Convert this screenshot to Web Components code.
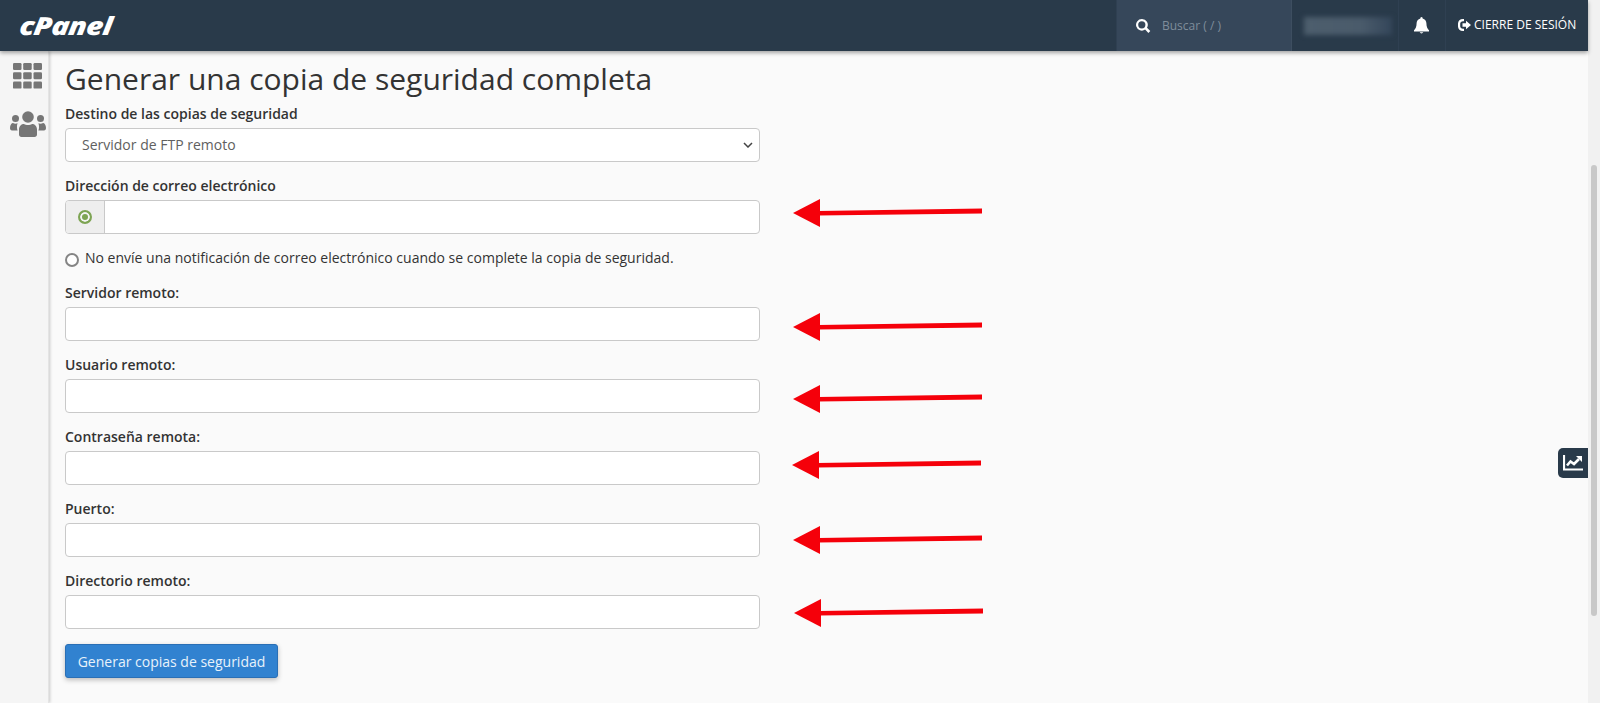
<!DOCTYPE html>
<html lang="es">
<head>
<meta charset="utf-8">
<title>Generar una copia de seguridad completa</title>
<style>
  html, body { margin: 0; height: 100%; overflow: hidden; }
  body { font-family: "Open Sans", "Liberation Sans", sans-serif; font-size: 14px; color: #333; background: #f1f1f1; }
</style>
</head>
<body>
<cp-page>
  <cp-header slot="header"></cp-header>
  <cp-sidebar slot="sidebar"></cp-sidebar>
  <cp-title>Generar una copia de seguridad completa</cp-title>
  <cp-field label="Destino de las copias de seguridad" kind="select" value="Servidor de FTP remoto"></cp-field>
  <cp-field label="Dirección de correo electrónico" kind="email"></cp-field>
  <cp-radio>No envíe una notificación de correo electrónico cuando se complete la copia de seguridad.</cp-radio>
  <cp-field label="Servidor remoto:"></cp-field>
  <cp-field label="Usuario remoto:"></cp-field>
  <cp-field label="Contraseña remota:"></cp-field>
  <cp-field label="Puerto:"></cp-field>
  <cp-field label="Directorio remoto:"></cp-field>
  <cp-button>Generar copias de seguridad</cp-button>
  <cp-stats slot="overlay"></cp-stats>
  <cp-arrow slot="overlay" x="793" tip="213" tail="211"></cp-arrow>
  <cp-arrow slot="overlay" x="793" tip="327" tail="325"></cp-arrow>
  <cp-arrow slot="overlay" x="793" tip="399" tail="397"></cp-arrow>
  <cp-arrow slot="overlay" x="792" tip="465" tail="463"></cp-arrow>
  <cp-arrow slot="overlay" x="793" tip="540" tail="538"></cp-arrow>
  <cp-arrow slot="overlay" x="794" tip="613" tail="611"></cp-arrow>
</cp-page>
<script>
function html(a, ...b) { return a.map((s, i) => s + (b[i] ?? '')).join('') }

function shadow(el, markup) {
  const root = el.attachShadow({ mode: 'open' });
  const template = document.createElement('template');
  template.innerHTML = markup;
  root.appendChild(template.content.cloneNode(true));
  return root;
}

class CpPage extends HTMLElement {
  constructor() {
    super();
    shadow(this, html`
      <style>
        :host { display: grid; grid-template-columns: 1588px 12px; height: 703px; position: relative; overflow: hidden; }
        .app { display: flex; flex-direction: column; height: 703px; min-width: 0; }
        .body { display: flex; flex: 1; min-height: 0; background: #fafafa; }
        main { flex: 1; padding: 8px 16px 0; min-width: 0; }
        .form { width: 695px; }
        .scroll { background: #f1f1f1; position: relative; }
        .thumb { position: absolute; left: 3px; width: 6px; top: 165px; height: 451px; background: #c8c8c8; border-radius: 3px; }
      </style>
      <div class="app">
        <slot name="header"></slot>
        <div class="body">
          <slot name="sidebar"></slot>
          <main><div class="form"><slot></slot></div></main>
        </div>
      </div>
      <div class="scroll"><div class="thumb"></div></div>
      <slot name="overlay"></slot>
    `);
  }
}

class CpHeader extends HTMLElement {
  constructor() {
    super();
    shadow(this, html`
      <style>
        :host { display: flex; height: 51px; background: #293a4a; color: #fff; box-shadow: 0 2px 4px rgba(0,0,0,.35); position: relative; z-index: 2; align-items: stretch; }
        .logo { font: italic 800 25px "Open Sans", sans-serif; letter-spacing: -.6px; padding: 8px 0 0 20px; transform-origin: 20px 25px; transform: skewX(-8deg) scaleX(1.18); }
        .grow { flex: 1; }
        .search { width: 176px; background: #36475a; border-left: 1px solid #2f4052; border-right: 1px solid #3d4e60; display: flex; align-items: center; padding-left: 18px; box-sizing: border-box; gap: 11px; }
        .search span { font-size: 12px; color: #7f8d9a; }
        .user { width: 107px; display: flex; align-items: center; padding-left: 12px; box-sizing: border-box; border-right: 1px solid #2f4052; }
        .blur { width: 88px; height: 18px; margin-top: 1px; background: linear-gradient(90deg, #4d5e6d 0, #4a5b6b 65%, #34465a 100%); filter: blur(2.500px); }
        .bell { width: 47px; display: flex; align-items: center; justify-content: center; border-right: 1px solid #2f4052; box-sizing: border-box; padding-right: 2px; }
        .out { width: 142px; display: flex; align-items: center; padding: 0 0 2px 12px; gap: 3px; font-size: 12px; white-space: nowrap; box-sizing: border-box; }
        svg { display: block; fill: #fff; }
      </style>
      <div class="logo">cPanel</div>
      <div class="grow"></div>
      <div class="search">
        <svg width="16" height="16" viewBox="0 0 16 16"><path d="M6.8 1a5.8 5.8 0 1 0 3.3 10.6l3.3 3.3 1.9-1.9-3.3-3.3A5.8 5.8 0 0 0 6.8 1zm0 2.2a3.6 3.6 0 1 1 0 7.2 3.6 3.6 0 0 1 0-7.2z"/></svg>
        <span>Buscar ( / )</span>
      </div>
      <div class="user"><div class="blur"></div></div>
      <div class="bell">
        <svg width="15" height="17" viewBox="0 0 15 17"><path d="M7.5 0a1.2 1.2 0 0 0-1.1 1.5C4 2 2.6 4 2.6 6.3c0 3.500-1 5.400-2.600 7V14.500h15V13.300c-1.600-1.600-2.600-3.500-2.600-7C12.400 4 11 2 8.600 1.500A1.200 1.200 0 0 0 7.500 0zM5.700 15.300a1.900 1.700 0 0 0 3.600 0z"/></svg>
      </div>
      <div class="out">
        <svg width="13" height="12" viewBox="0 0 13 12"><path d="M5 0C2 0 0 2 0 4.500v3C0 10 2 12 5 12h1V9.800H5C3.400 9.800 2.200 8.800 2.200 7.300V4.700C2.200 3.200 3.400 2.200 5 2.200h1V0z"/><path d="M4.500 4.300h3.500V1.800L13 6 8 10.200V7.700H4.500z"/></svg>
        <span>CIERRE DE SESIÓN</span>
      </div>
    `);
  }
}

class CpSidebar extends HTMLElement {
  constructor() {
    super();
    shadow(this, html`
      <style>
        :host { display: flex; flex-direction: column; align-items: center; width: 49px; box-sizing: border-box; background: #f5f5f5; box-shadow: 1px 0 3px rgba(0,0,0,.2); border-right: 1px solid #e4e4e4; padding: 12px 0 0 7px; gap: 22px; }
        svg { display: block; fill: #767676; }
      </style>
      <svg width="29" height="26" viewBox="0 0 29 26">
        <rect x="0" y="0" width="8.500" height="7" rx="1.200"/><rect x="10.200" y="0" width="8.500" height="7" rx="1.200"/><rect x="20.500" y="0" width="8.500" height="7" rx="1.200"/>
        <rect x="0" y="9.300" width="8.500" height="7" rx="1.200"/><rect x="10.200" y="9.300" width="8.500" height="7" rx="1.200"/><rect x="20.500" y="9.300" width="8.500" height="7" rx="1.200"/>
        <rect x="0" y="18.600" width="8.500" height="7" rx="1.200"/><rect x="10.200" y="18.600" width="8.500" height="7" rx="1.200"/><rect x="20.500" y="18.600" width="8.500" height="7" rx="1.200"/>
      </svg>
      <svg width="36" height="26" viewBox="0 0 36 26">
        <circle cx="18" cy="6" r="5.800"/><circle cx="5.500" cy="7.500" r="3.500"/><circle cx="30.500" cy="7.500" r="3.500"/>
        <path d="M9 23.500v-5c0-3.500 2.500-5.500 5-5.500 1 .7 2.400 1.100 4 1.100s3-.4 4-1.100c2.500 0 5 2 5 5.500v5c0 1.500-1 2.500-2.500 2.500h-13C10 26 9 25 9 23.500z"/>
        <path d="M0 17c0-3 1.500-5 3-5 .7.500 1.500.800 2.500.800.700 0 1.400-.200 2.100-.500-.300 1-.600 1.500-.600 3.700 0 1.700.300 2.800.700 3.500H2c-1.300 0-2-1-2-2.500z"/>
        <path d="M36 17c0-3-1.500-5-3-5-.7.500-1.500.800-2.500.800-.700 0-1.400-.200-2.100-.500.300 1 .600 1.500.600 3.700 0 1.700-.300 2.800-.700 3.500H34c1.300 0 2-1 2-2.500z"/>
      </svg>
    `);
  }
}

class CpTitle extends HTMLElement {
  constructor() {
    super();
    shadow(this, html`
      <style>
        :host { display: block; font-size: 30px; line-height: 40px; color: #333; margin-bottom: 5px; white-space: nowrap; }
      </style>
      <slot></slot>
    `);
  }
}

class CpField extends HTMLElement {
  constructor() {
    super();
    const label = this.getAttribute('label');
    const kind = this.getAttribute('kind');
    const value = this.getAttribute('value') || '';
    let control = '<div class="box"></div>';
    if (kind === 'select') {
      control = html`<div class="box sel"><span>${value}</span>
        <svg width="10" height="6" viewBox="0 0 10 6"><path d="M1 1l4 4 4-4" fill="none" stroke="#444" stroke-width="1.500"/></svg></div>`;
    } else if (kind === 'email') {
      control = html`<div class="box mail"><div class="addon"><i></i></div></div>`;
    }
    shadow(this, html`
      <style>
        :host { display: block; margin-bottom: 14px; }
        label { display: block; font-weight: 600; line-height: 20px; margin-bottom: 4px; color: #333; }
        .box { height: 34px; box-sizing: border-box; background: #fff; border: 1px solid #c9c9c9; border-radius: 4px; }
        .sel { display: flex; align-items: center; justify-content: space-between; padding: 0 6px 2px 16px; color: #606060; }
        .sel svg { margin-top: 2px; }
        .mail { overflow: hidden; }
        .addon { width: 39px; height: 100%; box-sizing: border-box; background: #eee; border-right: 1px solid #c9c9c9; display: flex; align-items: center; justify-content: center; }
        .addon i { width: 14px; height: 14px; box-sizing: border-box; border: 2px solid #7da453; border-radius: 50%; background: #7da453; box-shadow: inset 0 0 0 2px #f4f4f4; }
      </style>
      <label>${label}</label>
      ${control}
    `);
  }
}

class CpRadio extends HTMLElement {
  constructor() {
    super();
    shadow(this, html`
      <style>
        :host { display: flex; align-items: center; gap: 6px; line-height: 20px; margin: 14px 0 15px; color: #333; white-space: nowrap; }
        i { width: 14px; height: 14px; box-sizing: border-box; border: 2px solid #858585; border-radius: 50%; background: #fff; margin-top: 3px; }
      </style>
      <i></i><span><slot></slot></span>
    `);
  }
}

class CpButton extends HTMLElement {
  constructor() {
    super();
    shadow(this, html`
      <style>
        :host { display: block; width: 213px; margin-top: 15px; }
        button { display: block; font: 14px "Open Sans", sans-serif; height: 34px; width: 213px; padding: 0; background: #3182d0; color: #e8f2fb; border: 1px solid #2a6fb5; border-radius: 3px; box-shadow: 0 2px 5px rgba(0,0,0,.25); }
      </style>
      <button><slot></slot></button>
    `);
  }
}

class CpStats extends HTMLElement {
  constructor() {
    super();
    shadow(this, html`
      <style>
        :host { position: absolute; left: 1558px; top: 448px; width: 30px; height: 30px; background: #293a4a; border-radius: 5px 0 0 5px; display: flex; align-items: center; justify-content: center; }
        svg { display: block; }
      </style>
      <svg width="20" height="16" viewBox="0 0 20 16">
        <path d="M1 0v14.500h19" fill="none" stroke="#fff" stroke-width="2.200"/>
        <path d="M4 10.500l3.500-4 3.500 2.500 5-5" fill="none" stroke="#fff" stroke-width="2.600"/>
        <path d="M13 1h6v6z" fill="#fff"/>
      </svg>
    `);
  }
}

// red annotation arrows painted over the screenshot
class CpArrow extends HTMLElement {
  constructor() {
    super();
    const x = +this.getAttribute('x');
    const tip = +this.getAttribute('tip');
    const tail = +this.getAttribute('tail');
    const top = Math.min(tip, tail) - 16;
    const a = tip - top, b = tail - top;
    shadow(this, html`
      <style>
        :host { position: absolute; left: ${x}px; top: ${top}px; width: 192px; height: 32px; }
        svg { display: block; }
      </style>
      <svg width="192" height="32" viewBox="0 0 192 32">
        <path d="M25 ${a - 2}L189 ${b - 2.500}V${b + 2.500}L25 ${a + 2.500}z" fill="#f5000a"/>
        <path d="M0 ${a}L27 ${a - 14}V${a + 14}z" fill="#f5000a"/>
      </svg>
    `);
  }
}

customElements.define('cp-page', CpPage);
customElements.define('cp-header', CpHeader);
customElements.define('cp-sidebar', CpSidebar);
customElements.define('cp-title', CpTitle);
customElements.define('cp-field', CpField);
customElements.define('cp-radio', CpRadio);
customElements.define('cp-button', CpButton);
customElements.define('cp-stats', CpStats);
customElements.define('cp-arrow', CpArrow);
</script>
</body>
</html>
